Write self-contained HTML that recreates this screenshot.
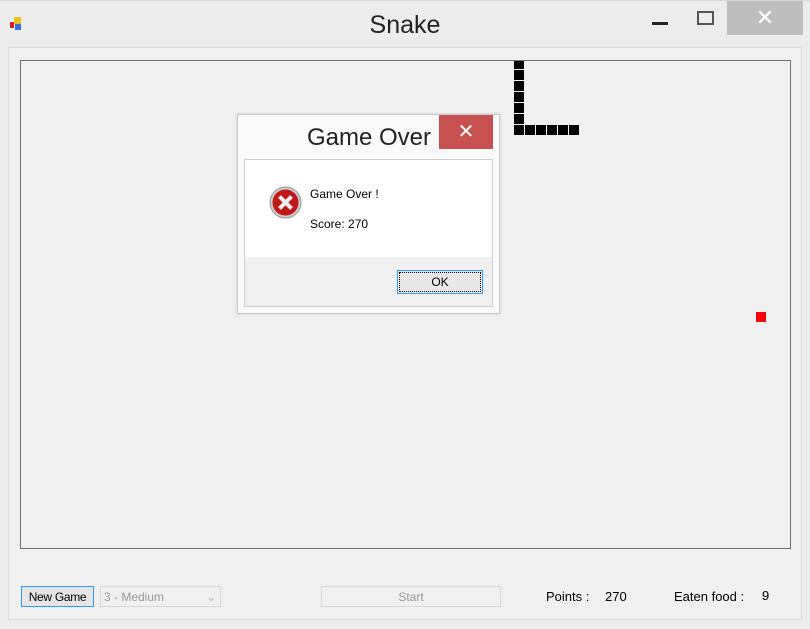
<!DOCTYPE html><html><head><style>
body{margin:0;width:810px;height:629px;background:#ececec;position:relative;overflow:hidden;font-family:"Liberation Sans",sans-serif}
.a{position:absolute}
.b{position:absolute;background:#000;width:10px;height:10px}
</style></head><body>
<div class="a" style="left:0;top:0;width:810px;height:1px;background:#d8d8d8"></div>
<div class="a" style="left:10px;top:17px;width:14px;height:14px">
<div class="a" style="left:4px;top:0;width:7px;height:7px;background:#f0c020"></div>
<div class="a" style="left:0;top:5px;width:4px;height:6px;background:#d02020"></div>
<div class="a" style="left:5px;top:7px;width:6px;height:6px;background:#3070e0"></div></div>
<div class="a" style="left:0;top:11px;width:810px;text-align:center;font-size:25px;color:#222">Snake</div>
<div class="a" style="left:652px;top:22px;width:16px;height:3px;background:#222"></div>
<div class="a" style="left:697px;top:11px;border:2px solid #555;box-sizing:border-box;width:17px;height:14px"></div>
<div class="a" style="left:727px;top:1px;width:76px;height:34px;background:#bebebe;color:#fff;font-size:22px;text-align:center;line-height:34px">✕</div>
<div class="a" style="left:8px;top:47px;width:794px;height:573px;background:#f0f0f0;border:1px solid #dcdcdc;box-sizing:border-box"></div>
<div class="a" style="left:20px;top:60px;width:771px;height:489px;border:1px solid #707070;box-sizing:border-box"></div>
<div class="b" style="left:514px;top:61px;height:8px"></div>
<div class="b" style="left:514px;top:70px"></div>
<div class="b" style="left:514px;top:81px"></div>
<div class="b" style="left:514px;top:92px"></div>
<div class="b" style="left:514px;top:103px"></div>
<div class="b" style="left:514px;top:114px"></div>
<div class="b" style="left:514px;top:125px"></div>
<div class="b" style="left:525px;top:125px"></div>
<div class="b" style="left:536px;top:125px"></div>
<div class="b" style="left:547px;top:125px"></div>
<div class="b" style="left:558px;top:125px"></div>
<div class="b" style="left:569px;top:125px"></div>
<div class="a" style="left:756px;top:312px;width:10px;height:10px;background:#f00"></div>
<div class="a" style="left:237px;top:114px;width:263px;height:200px;background:#fafafa;border:1px solid #c8c8c8;box-sizing:border-box;box-shadow:0 0 3px rgba(0,0,0,.15)"></div>
<div class="a" style="left:300px;top:124px;width:131px;text-align:right;font-size:24px;color:#222">Game Over</div>
<div class="a" style="left:439px;top:115px;width:54px;height:34px;background:#c75050;color:#fff;font-size:20px;text-align:center;line-height:34px">✕</div>
<div class="a" style="left:244px;top:159px;width:249px;height:148px;background:#f0f0f0;border:1px solid #d0d0d0;box-sizing:border-box"></div>
<div class="a" style="left:245px;top:160px;width:247px;height:97px;background:#fff"></div>
<svg class="a" style="left:269px;top:186px" width="33" height="33" viewBox="0 0 33 33"><circle cx="16.5" cy="16.5" r="15.5" fill="#ccc" stroke="#999"/><circle cx="16.5" cy="16.5" r="13" fill="#c01818"/><path d="M10.5 10.5L22.5 22.5M22.5 10.5L10.5 22.5" stroke="#eee" stroke-width="4"/></svg>
<div class="a" style="left:310px;top:187px;font-size:12px;color:#000">Game Over !</div>
<div class="a" style="left:310px;top:217px;font-size:12px;color:#000">Score: 270</div>
<div class="a" style="left:397px;top:270px;width:86px;height:24px;border:1px solid #3399ff;box-sizing:border-box;background:#e8e8e8;font-size:12px;text-align:center;line-height:22px"><div style="position:absolute;inset:1px;border:1px dotted #000"></div>OK</div>
<div class="a" style="left:21px;top:586px;width:73px;height:21px;border:1px solid #3399ff;box-sizing:border-box;background:#e5e5e5;font-size:12px;text-align:center;line-height:20px;letter-spacing:-0.3px">New Game</div>
<div class="a" style="left:100px;top:586px;width:121px;height:21px;border:1px solid #d9d9d9;box-sizing:border-box;font-size:12px;color:#999;line-height:20px;padding-left:3px">3 - Medium<span style="position:absolute;right:4px;color:#bbb">⌄</span></div>
<div class="a" style="left:321px;top:586px;width:180px;height:21px;border:1px solid #d9d9d9;box-sizing:border-box;font-size:12px;color:#999;text-align:center;line-height:20px">Start</div>
<div class="a" style="left:546px;top:589px;font-size:13px">Points :</div>
<div class="a" style="left:605px;top:589px;font-size:13px">270</div>
<div class="a" style="left:674px;top:589px;font-size:13px">Eaten food :</div>
<div class="a" style="left:762px;top:588px;font-size:13px">9</div>
</body></html>
